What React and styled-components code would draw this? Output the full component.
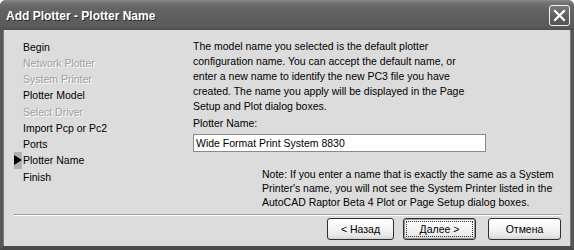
import React from "react";
import styled, { createGlobalStyle } from "styled-components";

const Global = createGlobalStyle`
  html, body { margin: 0; padding: 0; background: #ffffff; }
  body { font-family: "Liberation Sans", Arial, sans-serif; }
  * { box-sizing: border-box; }
`;

const Window = styled.div`
  width: 574px;
  height: 250px;
  display: flex;
  flex-direction: column;
  background: #5e5e5e;
  border-radius: 6px 6px 0 0;
  overflow: hidden;
`;

const TitleBar = styled.div`
  height: 30px;
  flex: none;
  display: flex;
  align-items: center;
  justify-content: space-between;
  padding: 0 4px 0 6px;
  background: linear-gradient(
    to bottom,
    #8a8a8a 0px,
    #727272 3px,
    #646464 8px,
    #5e5e5e 20px,
    #5a5a5a 27px,
    #4e4e4e 30px
  );
`;

const Title = styled.div`
  color: #ffffff;
  font-family: "Liberation Sans", Arial, sans-serif;
  font-weight: bold;
  font-size: 12px;
  text-shadow: 1px 1px 0 #2a2a2a;
  margin-top: 1px;
`;

const CloseButton = styled.div`
  width: 21px;
  height: 21px;
  margin-top: 1px;
  border: 1px solid #f2f2f2;
  border-radius: 3px;
  background: linear-gradient(to bottom, #7a7a7a, #5c5c5c 60%, #555555);
  display: flex;
  align-items: center;
  justify-content: center;
`;

const Body = styled.div`
  flex: 1;
  display: flex;
  flex-direction: column;
  background: #dcdcdc;
  border-left: 3px solid #575757;
  border-right: 3px solid #575757;
  border-bottom: 4px solid #4a4a4a;
  box-shadow: inset 1px 0 0 #7a7a7a, inset -1px 0 0 #7a7a7a;
`;

const Content = styled.div`
  flex: 1;
  display: flex;
  font-size: 10.5px;
  color: #000000;
`;

const Sidebar = styled.ul`
  list-style: none;
  margin: 0;
  padding: 8.5px 0 0 11px;
  width: 190px;
  flex: none;
`;

const Step = styled.li`
  display: flex;
  align-items: center;
  height: 16.25px;
  line-height: 16.25px;
  color: ${(p) => (p.$disabled ? "#a0a0a0" : "#000000")};
  text-shadow: ${(p) => (p.$disabled ? "1px 1px 0 #ffffff" : "none")};
`;

const Marker = styled.span`
  width: 8px;
  height: 17px;
  flex: none;
  margin-right: 1px;
  display: flex;
  align-items: center;
  background: ${(p) => (p.$active ? "#b2b2b2" : "transparent")};
`;

const Main = styled.div`
  flex: 1;
  padding: 9px 0 0 0;
  display: flex;
  flex-direction: column;
`;

const Para = styled.p`
  margin: 0;
  line-height: 15px;
  white-space: nowrap;
`;

const Label = styled.div`
  margin-top: 1.5px;
  line-height: 15px;
`;

const NameInput = styled.div`
  margin-top: 3.5px;
  width: 293px;
  height: 18px;
  background: #ffffff;
  border: 1px solid #8a8a8a;
  padding: 0 0 0 2px;
  line-height: 16px;
  font-size: 10.5px;
`;

const Note = styled.p`
  margin: 15px 0 0 69px;
  line-height: 14px;
  white-space: nowrap;
`;

const Footer = styled.div`
  flex: none;
  display: flex;
  flex-direction: column;
  padding: 0 10px 0 11px;
`;

const Separator = styled.div`
  height: 2px;
  border-top: 1px solid #9c9c9c;
  border-bottom: 1px solid #ffffff;
`;

const ButtonRow = styled.div`
  display: flex;
  justify-content: flex-end;
  padding: 2px 0 6px 0;
`;

const Button = styled.div`
  width: ${(p) => p.$w}px;
  height: 22px;
  margin-left: ${(p) => p.$gap}px;
  border: 1px solid #2e2e2e;
  border-radius: 3px;
  background: linear-gradient(to bottom, #ffffff, #f4f4f4 50%, #e6e6e6 85%, #d2d2d2);
  box-shadow: ${(p) => (p.$default ? "inset 0 0 0 1px #9a9a9a" : "none")};
  display: flex;
  align-items: center;
  justify-content: center;
  font-size: 10.5px;
  color: #000000;
  padding: 2px;
`;

const Focus = styled.div`
  width: 100%;
  height: 100%;
  display: flex;
  align-items: center;
  justify-content: center;
  border: 1px dotted ${(p) => (p.$on ? "#333333" : "transparent")};
`;

const steps = [
  { t: "Begin" },
  { t: "Network Plotter", d: true },
  { t: "System Printer", d: true },
  { t: "Plotter Model" },
  { t: "Select Driver", d: true },
  { t: "Import Pcp or Pc2" },
  { t: "Ports" },
  { t: "Plotter Name", a: true },
  { t: "Finish" },
];

export default function App() {
  return (
    <>
      <Global />
      <Window>
        <TitleBar>
          <Title>Add Plotter - Plotter Name</Title>
          <CloseButton>
            <svg width="13" height="13" viewBox="0 0 13 13">
              <path d="M2 2 L11 11 M11 2 L2 11" stroke="#ffffff" strokeWidth="2.2" strokeLinecap="square" />
            </svg>
          </CloseButton>
        </TitleBar>
        <Body>
          <Content>
            <Sidebar>
              {steps.map((s) => (
                <Step key={s.t} $disabled={s.d}>
                  <Marker $active={s.a}>
                    {s.a && (
                      <svg width="8" height="10" viewBox="0 0 8 10">
                        <path d="M0 0 L8 5 L0 10 Z" fill="#000000" />
                      </svg>
                    )}
                  </Marker>
                  {s.t}
                </Step>
              ))}
            </Sidebar>
            <Main>
              <Para>
                The model name you selected is the default plotter
                <br />
                configuration name. You can accept the default name, or
                <br />
                enter a new name to identify the new PC3 file you have
                <br />
                created. The name you apply will be displayed in the Page
                <br />
                Setup and Plot dialog boxes.
              </Para>
              <Label>Plotter Name:</Label>
              <NameInput>Wide Format Print System 8830</NameInput>
              <Note>
                Note: If you enter a name that is exactly the same as a System
                <br />
                Printer's name, you will not see the System Printer listed in the
                <br />
                AutoCAD Raptor Beta 4 Plot or Page Setup dialog boxes.
              </Note>
            </Main>
          </Content>
          <Footer>
            <Separator />
            <ButtonRow>
              <Button $w={67} $gap={0}>
                <Focus>&lt; Назад</Focus>
              </Button>
              <Button $w={73} $gap={9} $default>
                <Focus $on>Далее &gt;</Focus>
              </Button>
              <Button $w={73} $gap={12}>
                <Focus>Отмена</Focus>
              </Button>
            </ButtonRow>
          </Footer>
        </Body>
      </Window>
    </>
  );
}
